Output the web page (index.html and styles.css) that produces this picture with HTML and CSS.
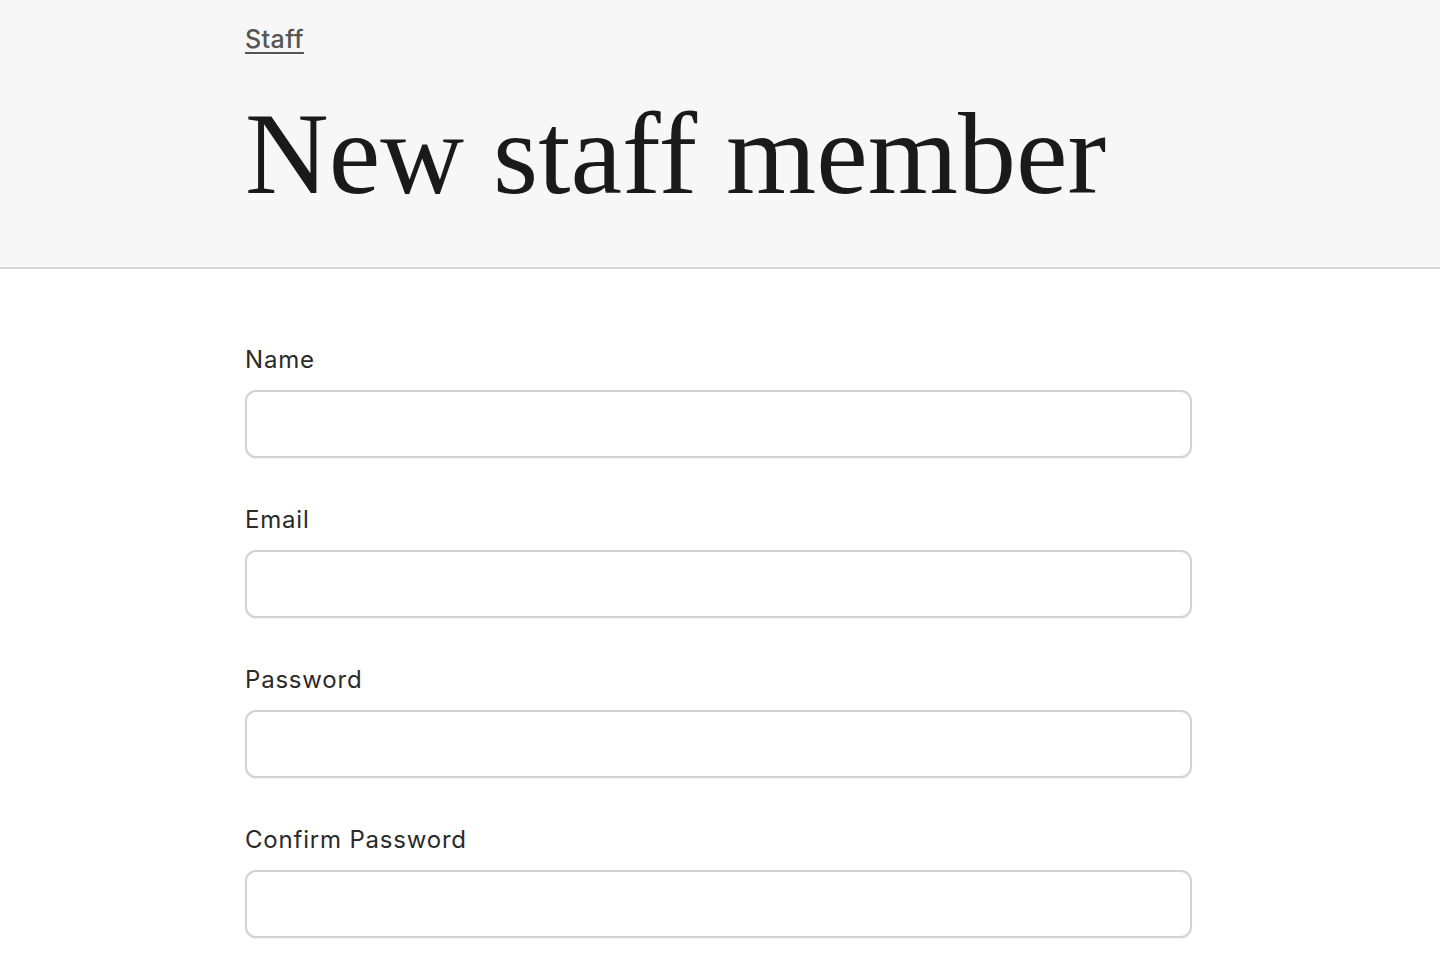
FILE: index.html
```html
<!DOCTYPE html>
<html lang="en">
<head>
<meta charset="UTF-8" />
<meta name="viewport" content="width=device-width, initial-scale=1" />
<title>New staff member</title>
<link rel="stylesheet" href="styles.css">
</head>
<body>

<header class="page-header">
  <div class="container">
    <a class="back-link" href="#">Staff</a>
    <h1>New staff member</h1>
  </div>
</header>

<main class="container">
  <form class="staff-form">
    <div class="field">
      <label for="name">Name</label>
      <input type="text" id="name" />
    </div>
    <div class="field">
      <label for="email">Email</label>
      <input type="email" id="email" />
    </div>
    <div class="field">
      <label for="password">Password</label>
      <input type="password" id="password" />
    </div>
    <div class="field">
      <label for="password_confirmation">Confirm Password</label>
      <input type="password" id="password_confirmation" />
    </div>
  </form>
</main>

</body>
</html>
```

FILE: styles.css
```css
body {
  margin: 0;
  background: #fff;
  color: #222;
  font-family: Inter, 'Noto Sans', sans-serif;
}
.container {
  width: 947px;
  margin-left: 245px;
}
.page-header {
  background: #f7f7f7;
  border-bottom: 2px solid #d6d6d6;
  height: 269px;
  box-sizing: border-box;
  padding-top: 24px;
}
.back-link {
  color: #555;
  font-size: 25px;
  font-weight: 500;
  letter-spacing: 0.4px;
  text-decoration: underline;
  text-underline-offset: 4px;
  text-decoration-thickness: 2px;
}
h1 {
  font-family: 'Liberation Serif', serif;
  font-weight: normal;
  font-size: 116px;
  line-height: 1;
  color: #1a1a1a;
  margin: 42px 0 0;
}
.staff-form {
  padding-top: 77px;
}
.field {
  display: flex;
  flex-direction: column;
  margin-bottom: 48px;
}
label {
  font-size: 24px;
  letter-spacing: 0.8px;
  color: #2a2a2a;
  line-height: 28px;
  margin-bottom: 16px;
}
input {
  height: 68px;
  box-sizing: border-box;
  border: 2px solid #d2d2d2;
  border-radius: 11px;
  background: #fff;
  font-size: 22px;
  padding: 0 16px;
  box-shadow: 0 1px 2px rgba(0, 0, 0, 0.06);
}
```
